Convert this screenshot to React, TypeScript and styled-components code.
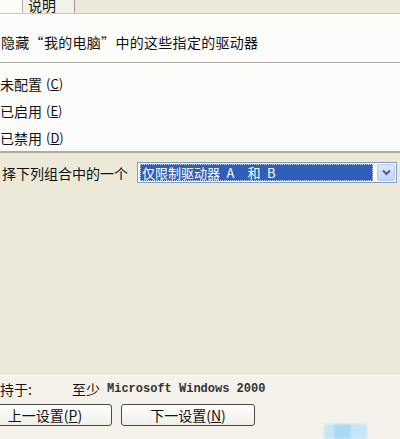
import React from "react";
import styled, { createGlobalStyle } from "styled-components";

const GlobalStyle = createGlobalStyle`
  html, body {
    margin: 0;
    padding: 0;
    background: #ece9d8;
  }
  body {
    font-family: "Noto Sans CJK SC", "Noto Sans", sans-serif;
    font-size: 14px;
    color: #111111;
  }
`;

const Dialog = styled.div`
  position: relative;
  width: 400px;
  height: 439px;
  overflow: hidden;
  display: flex;
  flex-direction: column;
  background: #ece9d8;
`;

const TabStrip = styled.div`
  display: flex;
  height: 13px;
  flex-shrink: 0;
`;

const Tab = styled.div<{ $active?: boolean; $width: number }>`
  width: ${(p) => p.$width}px;
  height: 13px;
  box-sizing: border-box;
  overflow: hidden;
  background: ${(p) => (p.$active ? "#fbfbf8" : "#f1f0ea")};
  border-right: ${(p) => (p.$active ? "none" : "1px solid #9c9a90")};
  border-left: ${(p) => (p.$active ? "none" : "1px solid #b5b3aa")};
  padding-left: 5px;
  font-size: 14px;
  line-height: 14px;
  span {
    display: block;
    margin-top: -2px;
  }
`;

const NamePanel = styled.div`
  height: 50px;
  box-sizing: border-box;
  background: #fcfcfa;
  border-top: 1px solid #c9c6ba;
  border-bottom: 1px solid #a8a69b;
  padding: 20px 0 0 1px;
  line-height: 16px;
  letter-spacing: 0.3px;
  white-space: nowrap;
`;

const RadioGroup = styled.div`
  height: 90px;
  flex-shrink: 0;
  box-sizing: border-box;
  background: #fcfcfa;
  border-top: 1px solid #ffffff;
  border-bottom: 2px solid #aeaca1;
  padding-top: 6px;
  display: flex;
  flex-direction: column;
`;

const RadioRow = styled.div`
  height: 27px;
  display: flex;
  align-items: center;
  white-space: nowrap;
`;

const Key = styled.span`
  text-decoration: underline;
  text-underline-offset: 1px;
`;

const Accel = styled.span`
  margin-left: 4px;
  font-size: 13px;
`;

const OptionArea = styled.div`
  flex: 1;
  background: #ece9d8;
  padding-top: 9px;
`;

const ComboRow = styled.div`
  display: flex;
  align-items: center;
  gap: 9px;
  padding-left: 2px;
  white-space: nowrap;
`;

const Combo = styled.div`
  width: 260px;
  height: 21px;
  box-sizing: border-box;
  border: 1px solid #7f9db9;
  background: #ffffff;
  display: flex;
  align-items: center;
  padding: 1px 1px 1px 2px;
  gap: 4px;
`;

const Selection = styled.div`
  flex: 1;
  height: 17px;
  box-sizing: border-box;
  background: #2f5fb8;
  border: 1px dotted #c7d3ea;
  color: #ffffff;
  font-size: 13px;
  line-height: 15px;
  padding-left: 1px;
  white-space: pre;
`;

const DropButton = styled.div`
  width: 18px;
  height: 17px;
  box-sizing: border-box;
  border: 1px solid #b7c9ec;
  border-radius: 2px;
  background: linear-gradient(#dde8fc, #c2d4f7);
  display: flex;
  align-items: center;
  justify-content: center;
`;

const Footer = styled.div`
  height: 64px;
  box-sizing: border-box;
  background: #f4f2eb;
  border-top: 1px solid #fbfaf6;
  padding-top: 4px;
  display: flex;
  flex-direction: column;
  gap: 6px;
`;

const SupportRow = styled.div`
  display: flex;
  align-items: center;
  height: 18px;
  white-space: nowrap;
`;

const SupportLabel = styled.span`
  width: 72px;
  flex-shrink: 0;
`;

const Mono = styled.span`
  font-family: "Liberation Mono", "DejaVu Sans Mono", monospace;
  font-size: 12px;
  font-weight: bold;
  color: #333333;
  margin-left: 7px;
`;

const ButtonRow = styled.div`
  display: flex;
  gap: 9px;
  margin-left: -22px;
`;

const NavButton = styled.button`
  width: 134px;
  height: 22px;
  box-sizing: border-box;
  border: 1px solid #4a4a48;
  border-radius: 3px;
  background: linear-gradient(#fefefd, #f0efe9);
  font-family: "Noto Sans CJK SC", "Noto Sans", sans-serif;
  font-size: 14px;
  line-height: 18px;
  color: #111111;
  padding: 0;
  white-space: nowrap;
`;

const Watermark = styled.div`
  position: absolute;
  left: 324px;
  top: 424px;
  width: 43px;
  height: 15px;
  background: #c6e6f8;
  filter: blur(1px);
  &::after {
    content: "";
    position: absolute;
    left: 10px;
    top: 0;
    width: 17px;
    height: 15px;
    background: #a9d9f4;
  }
`;

const Chevron = () => (
  <svg width="9" height="7" viewBox="0 0 9 7">
    <path d="M1 1.5 L4.5 5 L8 1.5" fill="none" stroke="#4d6185" strokeWidth="2" />
  </svg>
);

export default function App() {
  return (
    <>
      <GlobalStyle />
      <Dialog>
        <TabStrip>
          <Tab $active $width={22} />
          <Tab $width={53}>
            <span>说明</span>
          </Tab>
        </TabStrip>
        <NamePanel>隐藏“我的电脑”中的这些指定的驱动器</NamePanel>
        <RadioGroup>
          <RadioRow>
            未配置<Accel>(<Key>C</Key>)</Accel>
          </RadioRow>
          <RadioRow>
            已启用<Accel>(<Key>E</Key>)</Accel>
          </RadioRow>
          <RadioRow>
            已禁用<Accel>(<Key>D</Key>)</Accel>
          </RadioRow>
        </RadioGroup>
        <OptionArea>
          <ComboRow>
            择下列组合中的一个
            <Combo>
              <Selection>{"仅限制驱动器\u2002A\u2002\u2002和\u2002B"}</Selection>
              <DropButton>
                <Chevron />
              </DropButton>
            </Combo>
          </ComboRow>
        </OptionArea>
        <Footer>
          <SupportRow>
            <SupportLabel>持于:</SupportLabel>
            至少<Mono>Microsoft Windows 2000</Mono>
          </SupportRow>
          <ButtonRow>
            <NavButton>
              上一设置(<Key>P</Key>)
            </NavButton>
            <NavButton>
              下一设置(<Key>N</Key>)
            </NavButton>
          </ButtonRow>
        </Footer>
        <Watermark />
      </Dialog>
    </>
  );
}
